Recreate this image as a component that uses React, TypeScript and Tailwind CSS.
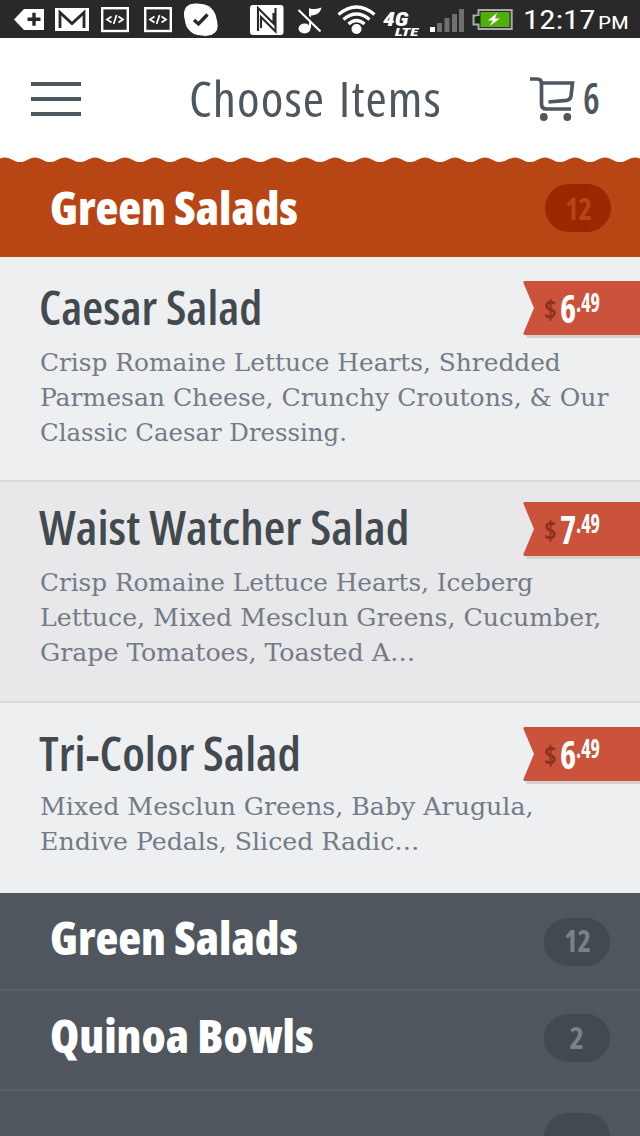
import { useLayoutEffect, useRef, useState, type ReactNode } from "react";

/** Single line of text, condensed or widened to an exact width. */
function Fit({ w, className = "", children }: { w: number; className?: string; children: ReactNode }) {
  const ref = useRef<HTMLSpanElement>(null);
  const [scale, setScale] = useState(1);
  useLayoutEffect(() => {
    if (ref.current) setScale(w / ref.current.offsetWidth);
  }, [w, children]);
  return (
    <span className={`block shrink-0 ${className}`} style={{ width: w }}>
      <span ref={ref} className="inline-block origin-left whitespace-nowrap" style={{ transform: `scaleX(${scale})` }}>
        {children}
      </span>
    </span>
  );
}

function Glyph({ x, w, className = "", children }: { x: number; w: number; className?: string; children: ReactNode }) {
  return (
    <svg width={w} height={38} viewBox={`${x} 0 ${w} 38`} className={`block shrink-0 ${className}`} fill="none">
      {children}
    </svg>
  );
}

function CodeGlyph({ className }: { className: string }) {
  return (
    <Glyph x={101} w={28} className={className}>
      <rect x="102.2" y="8.2" width="25.6" height="22.8" stroke="#fff" strokeWidth="2.4" />
      <path d="M111.5 16.5l-4.5 3 4.5 3M118.5 16.5l4.5 3-4.5 3M116.6 15l-3 9" stroke="#fff" strokeWidth="1.8" />
    </Glyph>
  );
}

function StatusBar() {
  return (
    <div className="flex h-[38px] shrink-0 bg-[#292929] text-white">
      <Glyph x={14} w={31} className="ml-[14px]">
        <path d="M14 19.5L24 9h20v21H24z" fill="#fff" />
        <path d="M27.5 19.3h13M34 12.8v13" stroke="#292929" strokeWidth="3.4" />
      </Glyph>
      <Glyph x={55} w={34} className="ml-[10px]">
        <rect x="55" y="8" width="34" height="23" fill="#fff" />
        <path d="M60 28V12.5l12 11 12-11V28" stroke="#292929" strokeWidth="2.8" />
      </Glyph>
      <CodeGlyph className="ml-[12px]" />
      <CodeGlyph className="ml-[15px]" />
      <Glyph x={183} w={36} className="ml-[11px]">
        <circle cx="200.7" cy="19.700" r="15.600" fill="#fff" />
        <circle cx="193.200" cy="13" r="9.200" fill="#fff" />
        <circle cx="208.500" cy="26" r="9.200" fill="#fff" />
        <ellipse cx="200.7" cy="19.700" rx="18.500" ry="14" transform="rotate(42 200.7 19.700)" fill="#fff" />
        <path d="M194 20l4.500 4 9-9.500" stroke="#292929" strokeWidth="3.4" />
      </Glyph>
      <Glyph x={250} w={34} className="ml-[31px]">
        <rect x="250" y="5" width="33.500" height="30" rx="3" fill="#fff" />
        <path d="M258 31V8l15.500 15.500V13M275.500 8v23.500L261 17v11" stroke="#292929" strokeWidth="2.100" />
      </Glyph>
      <Glyph x={297} w={26} className="ml-[13px]">
        <ellipse cx="304.500" cy="28.500" rx="6" ry="5" fill="#fff" />
        <path d="M309 28V8c3 2 7 1 12.500-.5-1 5-4 7.500-10.500 8v12.500z" fill="#fff" />
        <path d="M300 8.500l22 22" stroke="#292929" strokeWidth="2.500" />
        <path d="M298.500 10l22 21.500" stroke="#fff" strokeWidth="2.200" />
      </Glyph>
      <Glyph x={337} w={40} className="ml-[14px]">
        <circle cx="356.500" cy="29" r="5" fill="#fff" />
        <path d="M338.500 14.500q18-15 36 0M343.500 19.500q13-11 26 0M348.500 24q8-7 16 0" stroke="#fff" strokeWidth="3.200" />
      </Glyph>
      <div className="ml-[6px] w-[37px] shrink-0 font-['Roboto',sans-serif] font-black italic">
        <Fit w={25} className="mt-[11px] h-[17px] text-[20px] leading-[16px]">4G</Fit>
        <Fit w={23} className="ml-[12px] h-[9px] text-[11px] leading-[9px]">LTE</Fit>
      </div>
      <Glyph x={430} w={34} className="ml-[10px]">
        <path d="M430 27h5v5h-5z" fill="#fff" />
        <path d="M437 23h5v9h-5zM444.500 18h5v14h-5zM452 14h5v18h-5zM459 9h5v23h-5z" fill="#707070" />
      </Glyph>
      <Glyph x={472} w={41} className="ml-[8px]">
        <path d="M478.500 10h33.200v19h-33.200v-4.500h-5v-9h5z" stroke="#aaa" strokeWidth="2" />
        <path d="M480.500 12h29v15h-29v-4h-4v-7h4z" fill="#173000" />
        <rect x="480.500" y="12" width="29" height="15" fill="#4faf0c" />
        <path d="M497 13l-9 7.500h5l-3.500 5.500 10.500-7.500h-5z" fill="#fff" />
      </Glyph>
      <Fit w={72} className="ml-[10px] font-['Roboto',sans-serif] text-[26px] leading-[41px]">12:17</Fit>
      <Fit w={31} className="ml-[3px] font-['Roboto',sans-serif] text-[19px] leading-[45px]">PM</Fit>
    </div>
  );
}

function TopBar() {
  return (
    <header className="flex h-[119px] shrink-0 bg-white text-[#4e565e]">
      <div className="mt-[44px] ml-[31px] flex h-[34px] w-[50px] flex-col justify-between">
        <i className="h-1 bg-[#4e565e]" />
        <i className="h-1 bg-[#4e565e]" />
        <i className="h-1 bg-[#4e565e]" />
      </div>
      <Fit w={253} className="mt-[27px] ml-[108px] text-[49px] leading-[66px] font-normal tracking-[1px] [word-spacing:3px]">
        Choose Items
      </Fit>
      <svg width="46" height="46" viewBox="530 76 46 46" className="mt-[38px] ml-[88px] block shrink-0" fill="none">
        <path
          d="M530 79h7q4.500 0 4.500 4.500V104q0 5 5 5H571M541.500 83h31l-1.500 13q-.6 3.800-4.500 4.300L548.500 102"
          stroke="#4e565e"
          strokeWidth="3.700"
        />
        <circle cx="543.800" cy="117" r="3.900" fill="#4e565e" />
        <circle cx="567.300" cy="117" r="3.900" fill="#4e565e" />
      </svg>
      <Fit w={17} className="mt-[29px] ml-[7px] text-[44px] leading-[60px] font-semibold">6</Fit>
    </header>
  );
}

const wave =
  "M-10 5" + Array.from({ length: 22 }, () => "c5.500 0 9.500-4.600 15-4.600s9.500 4.600 15 4.600").join("") + "V6H-10z";

function Pill({ children, tone, className = "" }: { children?: ReactNode; tone: string; className?: string }) {
  return (
    <span className={`flex h-12 w-[66px] shrink-0 justify-center rounded-[24px] text-[31px] font-bold ${tone} ${className}`}>
      {children}
    </span>
  );
}

function Price({ amount, cents }: { amount: string; cents: string }) {
  return (
    <div className="flex h-[57px] w-[117px] shrink-0 flex-col">
      <svg width="117" height="57" viewBox="0 0 117 57" className="block shrink-0">
        <rect x="3" y="50" width="118" height="7" rx="2" fill="#d2d2d3" />
        <path d="M2 0H117V54H2Q-.5 54 .7 51.500L11 27 .7 2.500Q-.5 0 2 0z" fill="#cb523b" />
      </svg>
      <div className="-mt-[57px] flex h-[54px] pl-[21px] text-white">
        <Fit w={13} className="text-[27px] leading-[55px] font-bold text-[#88321f]">$</Fit>
        <Fit w={16} className="ml-[3px] text-[39px] leading-[53px] font-bold">{amount}</Fit>
        <Fit w={24} className="text-[26px] leading-[43px] font-bold">{cents}</Fit>
      </div>
    </div>
  );
}

type Item = {
  name: string;
  nameWidth: number;
  amount: string;
  lines: [string, number][];
  box: string;
  title: string;
  text: string;
};

const items: Item[] = [
  {
    name: "Caesar Salad",
    nameWidth: 223,
    amount: "6",
    lines: [
      ["Crisp Romaine Lettuce Hearts, Shredded", 521],
      ["Parmesan Cheese, Crunchy Croutons, & Our", 568],
      ["Classic Caesar Dressing.", 307],
    ],
    box: "h-[225px] border-b-2 border-[#d8d9db] bg-[#eeeff1] pt-6",
    title: "leading-[53px]",
    text: "mt-[7px]",
  },
  {
    name: "Waist Watcher Salad",
    nameWidth: 370,
    amount: "7",
    lines: [
      ["Crisp Romaine Lettuce Hearts, Iceberg", 493],
      ["Lettuce, Mixed Mesclun Greens, Cucumber,", 561],
      ["Grape Tomatoes, Toasted A…", 375],
    ],
    box: "h-[221px] border-b-2 border-[#d8d9db] bg-[#e8e8ea] pt-5",
    title: "leading-[50px]",
    text: "mt-[6px]",
  },
  {
    name: "Tri-Color Salad",
    nameWidth: 262,
    amount: "6",
    lines: [
      ["Mixed Mesclun Greens, Baby Arugula,", 493],
      ["Endive Pedals, Sliced Radic…", 380],
    ],
    box: "h-[190px] bg-[#eeeff1] pt-6",
    title: "leading-[53px]",
    text: "mt-[5px]",
  },
];

function MenuItem({ item }: { item: Item }) {
  return (
    <article className={`shrink-0 ${item.box}`}>
      <div className="flex h-[57px] justify-between pl-[39px]">
        <Fit w={item.nameWidth} className={`text-[46px] font-semibold text-[#42494f] ${item.title}`}>
          {item.name}
        </Fit>
        <Price amount={item.amount} cents=".49" />
      </div>
      <div className={`pl-10 font-['DejaVu_Serif',serif] text-[25px] leading-[35px] text-[#727b87] ${item.text}`}>
        {item.lines.map(([line, width]) => (
          <Fit key={line} w={width} className="h-[35px]">{line}</Fit>
        ))}
      </div>
    </article>
  );
}

export default function App() {
  return (
    <div className="flex h-[1136px] w-[640px] flex-col overflow-hidden bg-[#4f565e] font-['Open_Sans','Noto_Sans',sans-serif] [font-stretch:75%]">
      <StatusBar />
      <TopBar />
      <section className="h-[100px] shrink-0 bg-[#b84614] text-white">
        <svg width="640" height="6" viewBox="0 0 640 6" className="block">
          <rect width="640" height="6" fill="#fff" />
          <path d={wave} fill="#b84614" />
        </svg>
        <div className="flex h-[94px] justify-between pr-[29px] pl-[50px]">
          <Fit w={248} className="mt-[12px] text-[46px] leading-[65px] font-extrabold">Green Salads</Fit>
          <Pill tone="bg-[#9b2700] text-[#b84614] leading-[48px]" className="mt-[21px]">
            <Fit w={27}>12</Fit>
          </Pill>
        </div>
      </section>
      {items.map((item) => (
        <MenuItem key={item.name} item={item} />
      ))}
      <section className="flex h-[98px] shrink-0 justify-between border-b-2 border-[#5a616a] pr-[30px] pl-[50px] text-white">
        <Fit w={248} className="mt-[12px] text-[46px] leading-[65px] font-extrabold">Green Salads</Fit>
        <Pill tone="bg-[#42494f] text-[#78828a] leading-[45px]" className="mt-[25px]">
          <Fit w={27}>12</Fit>
        </Pill>
      </section>
      <section className="flex h-[100px] shrink-0 justify-between border-b-2 border-[#5a616a] pr-[30px] pl-[50px] text-white">
        <Fit w={264} className="mt-[12px] text-[46px] leading-[65px] font-extrabold">Quinoa Bowls</Fit>
        <Pill tone="bg-[#42494f] text-[#78828a] leading-[46px]" className="mt-[23px]">
          <Fit w={15}>2</Fit>
        </Pill>
      </section>
      <section className="flex h-[98px] shrink-0 justify-end pr-[30px]">
        <Pill tone="bg-[#42494f]" className="mt-[22px]" />
      </section>
    </div>
  );
}
